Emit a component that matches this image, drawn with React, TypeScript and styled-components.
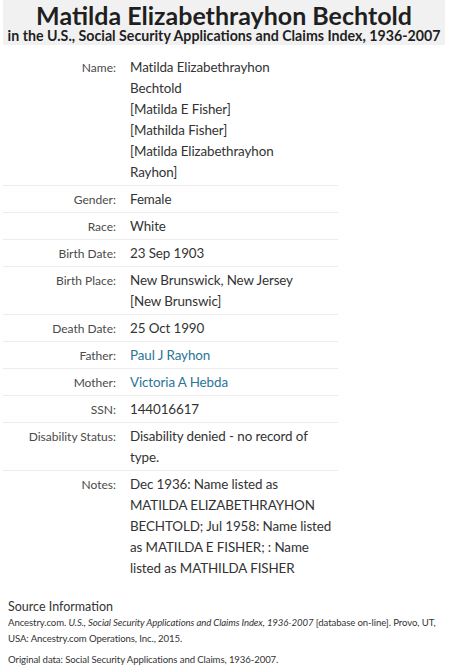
import styled, { createGlobalStyle } from 'styled-components'

const GlobalStyle = createGlobalStyle`
  body {
    margin: 0;
    background: #fff;
    font-family: Lato, 'Open Sans', sans-serif;
    color: #333;
  }
`

const Page = styled.div`
  width: 458px;
  padding: 0 3px;
  box-sizing: border-box;
`

const Header = styled.header`
  width: 442px;
  background: #f1f1f1;
  text-align: center;
  padding: 2px 0 1px;
`

const Title = styled.h1`
  margin: 0;
  font-size: 25px;
  line-height: 26px;
  font-weight: 700;
  color: #1f1f1f;
`

const Subtitle = styled.h2`
  margin: 0;
  font-size: 14.2px;
  line-height: 16px;
  font-weight: 700;
  color: #1f1f1f;
  white-space: nowrap;
`

const Table = styled.div`
  width: 335px;
  margin-top: 9px;
`

const Row = styled.div<{ $last?: boolean }>`
  display: grid;
  grid-template-columns: 113px 1fr;
  column-gap: 14px;
  padding: 3px 0 2px;
  border-bottom: ${(p) => (p.$last ? 'none' : '1px solid #ececec')};
`

const Label = styled.div`
  text-align: right;
  font-size: 12px;
  line-height: 21px;
  color: #4a4a4a;
`

const Value = styled.div`
  font-size: 13.4px;
  line-height: 21px;
  color: #333;
  letter-spacing: -0.1px;
`

const Link = styled.a`
  color: #2b7597;
  text-decoration: none;
`

const Source = styled.section`
  padding: 18px 5px 0;
`

const SourceTitle = styled.div`
  font-size: 12.5px;
  line-height: 16px;
  color: #333;
`

const Citation = styled.p`
  margin: 0 0 5px;
  font-size: 9.6px;
  line-height: 16px;
  letter-spacing: -0.1px;
  color: #333;
`

const rows: { label: string; value: React.ReactNode }[] = [
  {
    label: 'Name',
    value: (
      <>
        Matilda Elizabethrayhon
        <br />
        Bechtold
        <br />
        [Matilda E Fisher]
        <br />
        [Mathilda Fisher]
        <br />
        [Matilda Elizabethrayhon
        <br />
        Rayhon]
      </>
    ),
  },
  { label: 'Gender', value: 'Female' },
  { label: 'Race', value: 'White' },
  { label: 'Birth Date', value: '23 Sep 1903' },
  {
    label: 'Birth Place',
    value: (
      <>
        New Brunswick, New Jersey
        <br />
        [New Brunswic]
      </>
    ),
  },
  { label: 'Death Date', value: '25 Oct 1990' },
  { label: 'Father', value: <Link href="#">Paul J Rayhon</Link> },
  { label: 'Mother', value: <Link href="#">Victoria A Hebda</Link> },
  { label: 'SSN', value: '144016617' },
  { label: 'Disability Status', value: 'Disability denied - no record of type.' },
  {
    label: 'Notes',
    value: (
      <>
        Dec 1936: Name listed as
        <br />
        MATILDA ELIZABETHRAYHON
        <br />
        BECHTOLD; Jul 1958: Name listed
        <br />
        as MATILDA E FISHER; : Name
        <br />
        listed as MATHILDA FISHER
      </>
    ),
  },
]

export default function App() {
  return (
    <Page>
      <GlobalStyle />
      <Header>
        <Title>Matilda Elizabethrayhon Bechtold</Title>
        <Subtitle>in the U.S., Social Security Applications and Claims Index, 1936-2007</Subtitle>
      </Header>
      <Table>
        {rows.map((r, i) => (
          <Row key={r.label} $last={i === rows.length - 1}>
            <Label>{r.label}:</Label>
            <Value>{r.value}</Value>
          </Row>
        ))}
      </Table>
      <Source>
        <SourceTitle>Source Information</SourceTitle>
        <Citation>
          Ancestry.com. <i>U.S., Social Security Applications and Claims Index, 1936-2007</i> [database
          on-line]. Provo, UT, <br />
          USA: Ancestry.com Operations, Inc., 2015.
        </Citation>
        <Citation>Original data: Social Security Applications and Claims, 1936-2007.</Citation>
      </Source>
    </Page>
  )
}
